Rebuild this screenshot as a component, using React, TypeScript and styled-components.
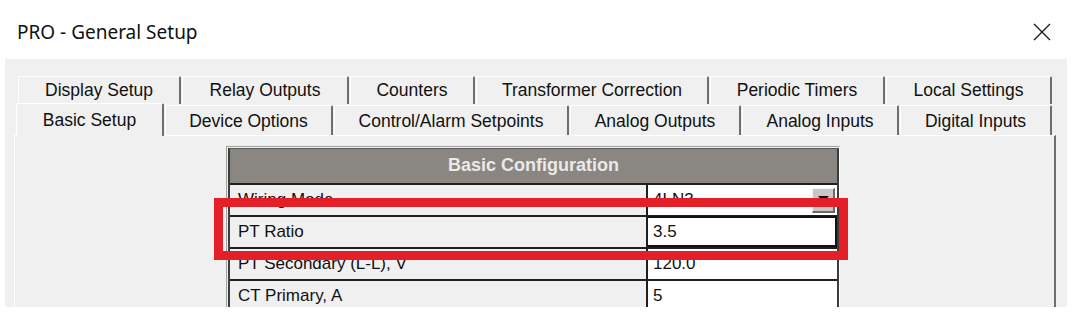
import React from "react";
import styled, { createGlobalStyle } from "styled-components";

const GlobalStyle = createGlobalStyle`
  html, body { margin: 0; padding: 0; background: #ffffff; }
  body { font-family: "Liberation Sans", Arial, sans-serif; color: #111; }
`;

const Window = styled.div`
  width: 1084px;
  height: 324px;
  background: #ffffff;
  overflow: hidden;
`;

const TitleBar = styled.div`
  height: 59px;
  display: flex;
  align-items: center;
  justify-content: space-between;
  padding: 0 33px 0 17px;
  box-sizing: border-box;
`;

const Title = styled.div`
  font-family: "Noto Sans", "Open Sans", sans-serif;
  font-size: 19px;
  color: #111;
  margin-top: 5px;
`;

const CloseButton = styled.div`
  width: 18px;
  height: 18px;
  display: flex;
  margin-top: 5px;
`;

const Frame = styled.div`
  margin: 0 17px 0 5px;
  height: 248px;
  background: #f0f0f0;
  padding: 17px 0 0 9px;
  box-sizing: border-box;
  overflow: hidden;
`;

const TabRow = styled.div<{ $indent: number; $height: number }>`
  display: flex;
  align-items: flex-end;
  height: ${(p) => p.$height}px;
  margin-left: ${(p) => p.$indent}px;
  position: relative;
`;

const Tab = styled.div<{ $w: number; $active?: boolean }>`
  width: ${(p) => p.$w}px;
  height: ${(p) => (p.$active ? 33 : 30)}px;
  box-sizing: border-box;
  display: flex;
  align-items: center;
  justify-content: center;
  background: #f0f0f0;
  border-top: 1px solid #ffffff;
  border-left: 1px solid #ffffff;
  border-right: 2px solid #6e6e6e;
  border-top-right-radius: 2px;
  font-size: 17.5px;
  color: #111;
  white-space: nowrap;
  padding-top: ${(p) => (p.$active ? 0 : 1)}px;
  margin-bottom: ${(p) => (p.$active ? -1 : 0)}px;
  position: relative;
  z-index: ${(p) => (p.$active ? 2 : 1)};
  & + & { margin-left: 1px; }
`;

const BackTab = styled(Tab)`
  height: 28px;
  padding-top: 0;
`;

const Content = styled.div`
  width: 1042px;
  height: 200px;
  box-sizing: border-box;
  background: #f0f0f0;
  border-top: 1px solid #ffffff;
  border-left: 1px solid #ffffff;
  border-right: 2px solid #6e6e6e;
  padding: 10px 0 0 211px;
`;

const TableWrap = styled.div`
  position: relative;
  width: 614px;
  border-top: 1px solid #a0a0a0;
  border-left: 1px solid #a0a0a0;
  border-right: 1px solid #ffffff;
  padding: 1px 0 0 1px;
  box-sizing: border-box;
`;

const Table = styled.div`
  border-left: 2px solid #3c3c3c;
  border-right: 2px solid #3c3c3c;
  border-top: 1px solid #5a5a5a;
  display: flex;
  flex-direction: column;
`;

const Header = styled.div`
  height: 34px;
  background: #8a8782;
  color: #e9e9e9;
  font-weight: bold;
  font-size: 18px;
  display: flex;
  align-items: center;
  justify-content: center;
  padding-bottom: 2px;
  box-sizing: border-box;
`;

const Row = styled.div`
  display: grid;
  grid-template-columns: 418px 1fr;
  height: 32px;
  border-top: 2px solid #1f1f1f;
  box-sizing: border-box;
`;

const Label = styled.div`
  background: #f0f0f0;
  border-right: 2px solid #1f1f1f;
  display: flex;
  align-items: center;
  padding-left: 8px;
  font-size: 17px;
  color: #111;
`;

const Value = styled.div<{ $editing?: boolean }>`
  background: #ffffff;
  display: flex;
  align-items: center;
  justify-content: space-between;
  padding: 0 2px 0 5px;
  font-size: 17px;
  color: #111;
  box-sizing: border-box;
  border: ${(p) => (p.$editing ? "2px solid #111" : "none")};
  border-left: none;
  margin-top: ${(p) => (p.$editing ? "-1px" : "0")};
`;

const DropButton = styled.div`
  width: 23px;
  height: 25px;
  box-sizing: border-box;
  background: #c8c8c8;
  border-top: 1px solid #f4f4f4;
  border-left: 1px solid #f4f4f4;
  border-right: 2px solid #6a6a6a;
  border-bottom: 2px solid #6a6a6a;
  display: flex;
  align-items: center;
  justify-content: center;
`;

const Highlight = styled.div`
  position: absolute;
  left: -13px;
  top: 51px;
  width: 634px;
  height: 62px;
  box-sizing: border-box;
  border: 9px solid #e41f28;
  pointer-events: none;
  z-index: 5;
`;

const backTabs: [string, number][] = [
  ["Display Setup", 163],
  ["Relay Outputs", 167],
  ["Counters", 125],
  ["Transformer Correction", 233],
  ["Periodic Timers", 175],
  ["Local Settings", 166],
];

const frontTabs: [string, number, boolean?][] = [
  ["Basic Setup", 148, true],
  ["Device Options", 168],
  ["Control/Alarm Setpoints", 235],
  ["Analog Outputs", 171],
  ["Analog Inputs", 157],
  ["Digital Inputs", 152],
];

export default function App() {
  return (
    <Window>
      <GlobalStyle />
      <TitleBar>
        <Title>PRO - General Setup</Title>
        <CloseButton>
          <svg width="18" height="18" viewBox="0 0 18 18">
            <path d="M1 1 L17 17 M17 1 L1 17" stroke="#1a1a1a" strokeWidth="1.3" fill="none" />
          </svg>
        </CloseButton>
      </TitleBar>
      <Frame>
        <TabRow $indent={4} $height={28}>
          {backTabs.map(([t, w]) => (
            <BackTab key={t} $w={w}>{t}</BackTab>
          ))}
        </TabRow>
        <TabRow $indent={2} $height={31}>
          {frontTabs.map(([t, w, a]) => (
            <Tab key={t} $w={w} $active={a}>{t}</Tab>
          ))}
        </TabRow>
        <Content>
          <TableWrap>
            <Table>
              <Header>Basic Configuration</Header>
              <Row>
                <Label>Wiring Mode</Label>
                <Value>
                  <span>4LN3</span>
                  <DropButton>
                    <svg width="11" height="7" viewBox="0 0 11 7">
                      <path d="M0 0 H11 L5.5 6 Z" fill="#111" />
                    </svg>
                  </DropButton>
                </Value>
              </Row>
              <Row>
                <Label>PT Ratio</Label>
                <Value $editing>3.5</Value>
              </Row>
              <Row>
                <Label>PT Secondary (L-L), V</Label>
                <Value>120.0</Value>
              </Row>
              <Row>
                <Label>CT Primary, A</Label>
                <Value>5</Value>
              </Row>
            </Table>
            <Highlight />
          </TableWrap>
        </Content>
      </Frame>
    </Window>
  );
}
